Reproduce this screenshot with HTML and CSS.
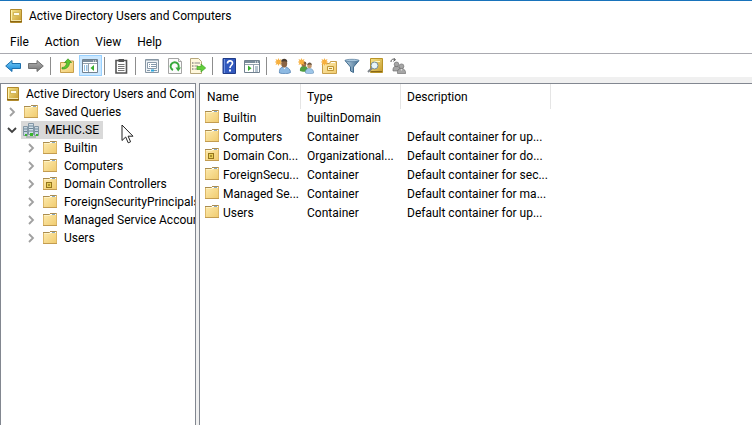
FILE: index.html
```html
<!DOCTYPE html>
<html lang="en">
<head>
<meta charset="utf-8">
<title>Active Directory Users and Computers</title>
<link rel="stylesheet" href="styles.css">
</head>
<body>
<svg class="defs" aria-hidden="true">
  <defs>
    <linearGradient id="gold" x1="0" y1="0" x2="1" y2="1"><stop offset="0" stop-color="#fdebb0"/><stop offset="1" stop-color="#f0cb6e"/></linearGradient>
    <linearGradient id="book" x1="0" y1="0" x2="1" y2="1"><stop offset="0" stop-color="#f6e58c"/><stop offset="1" stop-color="#c69a2b"/></linearGradient>
    <linearGradient id="blue" x1="0" y1="0" x2="0" y2="1"><stop offset="0" stop-color="#7cd0f8"/><stop offset="1" stop-color="#1383d6"/></linearGradient>
    <linearGradient id="grey" x1="0" y1="0" x2="0" y2="1"><stop offset="0" stop-color="#b5b5b5"/><stop offset="1" stop-color="#707070"/></linearGradient>
    <linearGradient id="steel" x1="0" y1="0" x2="1" y2="0"><stop offset="0" stop-color="#b9d2e4"/><stop offset="1" stop-color="#456f91"/></linearGradient>
    <symbol id="i-folder" viewBox="0 0 16 16">
      <path d="M1.500 2.500h6l1-1h6v12h-13z" fill="url(#gold)" stroke="#dcb768"/>
      <path d="M1 2.500h6.500M8 1.500h6.500" stroke="#a98c50"/>
      <path d="M8 2.500h6" stroke="#fff"/><path d="M10 2.500h3" stroke="#87a9c4"/>
      <path d="M2 3.500h6.500" stroke="#fff3c4"/><path d="M1 13.500h14" stroke="#c39c50"/>
    </symbol>
    <symbol id="i-ou" viewBox="0 0 16 16">
      <use href="#i-folder"/><rect x="4.500" y="6.500" width="5" height="5" fill="#e9cf58" stroke="#94751c"/><path d="M6 9h2" stroke="#6b5310"/>
    </symbol>
    <symbol id="i-book" viewBox="0 0 16 16">
      <path d="M2.500 1.500h11v13h-11z" fill="url(#book)" stroke="#b18a2c"/>
      <path d="M3.500 2v10" stroke="#fff3ae"/><path d="M2 13.500h12" stroke="#8b6714"/><path d="M3 12.500h10" stroke="#f4e7ac"/>
      <rect x="5.500" y="4.500" width="6" height="3" fill="#fffce9" stroke="#d3b75a"/>
    </symbol>
    <symbol id="i-domain" viewBox="0 0 16 16">
      <path d="M5.500 1.500h5v11h-5z" fill="#d3dfe8" stroke="#8296a5"/><path d="M.5 4.500h4v9h-4zM11.500 4.500h4v9h-4z" fill="#c8d7e2" stroke="#8296a5"/>
      <path d="M6 4h4M6 6.500h4M6 9h4M1 7h3M1 9.500h3M12 7h3M12 9.500h3" stroke="#6d8899"/>
      <path d="M2 12h2v2H2zM7 11h3v3H7zM13 12h2v2h-2z" fill="#38b52d"/><path d="M3 15h10" stroke="#87a094"/>
    </symbol>
    <symbol id="i-right" viewBox="0 0 16 16"><path d="M6 4l4 4-4 4" fill="none" stroke="#a0a0a0" stroke-width="1.800"/></symbol>
    <symbol id="i-down" viewBox="0 0 16 16"><path d="M4 6l4 4 4-4" fill="none" stroke="#404040" stroke-width="1.800"/></symbol>
    <symbol id="i-back" viewBox="0 0 16 16"><path d="M.7 8L7 2.500V5.500h8.500v5H7v3z" fill="url(#blue)" stroke="#1d6fac"/></symbol>
    <symbol id="i-forward" viewBox="0 0 16 16"><path d="M15.300 8L9 2.500V5.500H.5v5H9v3z" fill="url(#grey)" stroke="#707070"/></symbol>
    <symbol id="i-up" viewBox="0 0 16 16">
      <path d="M1.500 4.500h6l1-1.500h6v11.500h-13z" fill="url(#gold)" stroke="#c79f4b"/>
      <path d="M3 9.500C6 9.500 7.500 7.500 7.500 4.500H5.500L9 .8l3.500 3.700h-2C10.500 8.500 7.500 11.500 3 11z" fill="#5bc62d" stroke="#39931e" stroke-width=".7"/>
    </symbol>
    <symbol id="i-tree" viewBox="0 0 16 16">
      <path d="M.5 1.500h15v13H.5z" fill="#fff" stroke="#71818f"/><path d="M1 2h14v2H1z" fill="#7a8c9b"/><path d="M11 3h1M13 3h1" stroke="#fff"/>
      <path d="M1 5.500h14M6.500 6v8" stroke="#93a1ad"/><path d="M2 8h1M4 8h1.500M2 10h1M4 10h1.500M2 12h1M4 12h1.500" stroke="#2e83c5"/><path d="M12 7v6L8.500 10z" fill="#36ae2d"/>
    </symbol>
    <symbol id="i-clip" viewBox="0 0 16 16">
      <path d="M3 2.500h10.500V15H3z" fill="#fff" stroke="#555" stroke-width="1.600"/><path d="M5.500 1h5.500v3H5.500z" fill="#555"/>
      <path d="M5 6.500h6.500M5 8.500h6.500M5 10.500h6.500M5 12.500h6.500" stroke="#777"/>
    </symbol>
    <symbol id="i-props" viewBox="0 0 16 16">
      <path d="M1.500 1.500h13v13h-13z" fill="#f0f4f7" stroke="#8796a3"/><path d="M2 2.500h12" stroke="#b3c0ca"/>
      <path d="M3.500 4.500h9v6h-9z" fill="#fff" stroke="#8a9bab"/><path d="M5 6.500h1M7 6.500h5M5 8.500h1M7 8.500h5M3 12.500h3M10 12.500h3" stroke="#8298ab"/><path d="M7 11.500h3v2H7z" fill="#29a7df"/>
    </symbol>
    <symbol id="i-refresh" viewBox="0 0 16 16">
      <path d="M1.500.5h10l3 3v12h-13z" fill="#fbfbfb" stroke="#a5a5a5"/><path d="M11.500.5v3h3" fill="#eee" stroke="#a5a5a5"/>
      <path d="M6 12A4 4 0 1 1 11.300 10" fill="none" stroke="#36a83b" stroke-width="2"/><path d="M8.500 9.500h5.500L11.200 13.500z" fill="#36a83b"/>
    </symbol>
    <symbol id="i-export" viewBox="0 0 16 16">
      <path d="M.5.5h8l3 3v12H.5z" fill="#fff8dc" stroke="#b6a77c"/><path d="M2 5h1.500M2 8h1.500M2 11h1.500" stroke="#555"/><path d="M4.500 5H10M4.500 8H8M4.500 11H8" stroke="#8b8b8b"/>
      <path d="M7 8.500h4V6l4.700 4-4.700 4v-2.500H7z" fill="#62cf3a" stroke="#43a328" stroke-width=".7"/>
    </symbol>
    <symbol id="i-help" viewBox="0 0 16 16">
      <path d="M2 .5h12.500v15H2z" fill="#3158bd" stroke="#203b87"/><path d="M3.500 1v14" stroke="#6e91df"/>
      <path d="M6.500 5.500C6.500 2 11.500 2 11.500 5.200c0 2-2.500 2.200-2.500 4.800" fill="none" stroke="#fff" stroke-width="1.700"/><path d="M8 11.500h2v2H8z" fill="#fff"/>
    </symbol>
    <symbol id="i-action" viewBox="0 0 16 16">
      <path d="M.5 2.500h15v12H.5z" fill="#fff" stroke="#71818f"/><path d="M1 3h14v2H1z" fill="#7a8c9b"/><path d="M11 4h1M13 4h1" stroke="#fff"/>
      <path d="M1 6.500h14M9.500 7v7" stroke="#93a1ad"/><path d="M4 7.500v5.500L7.500 10.200z" fill="#36ae2d"/><path d="M11 9h3M11 11h3M11 13h3" stroke="#6e8ba2"/>
    </symbol>
    <symbol id="i-star" viewBox="0 0 16 16"><path d="M3.500 0l.8 2L6.500 1l-1 2.200 2 .8-2 .8 1 2.200-2.200-1-.8 2-.8-2-2.200 1 1-2.200-2-.8 2-.8L.5 1l2.200 1z" fill="#f7b03e"/></symbol>
    <symbol id="i-user" viewBox="0 0 16 16">
      <path d="M4.500 15c-.5-4 1-6 4.500-6s6.500 2 6.500 5.500c-2 1.500-8 1.500-11 .5z" fill="#8db9e2" stroke="#4779ac" stroke-width=".7"/>
      <path d="M8 9.200l1.500 2 1.500-2z" fill="#fff"/><ellipse cx="9.200" cy="5.500" rx="3" ry="4" fill="#8a6445"/><path d="M6.200 4C5.500-.5 13-.5 12.200 4c-1.500-1-4-1-6 0z" fill="#493d33"/><use href="#i-star"/>
    </symbol>
    <symbol id="i-group" viewBox="0 0 16 16">
      <path d="M2 13c-.5-3 1-5 4-5s4 2 4 5c-2 1-6 1-8 0z" fill="#4e9e3f"/><circle cx="6" cy="6.500" r="2.300" fill="#986c45"/><path d="M3.700 6c0-3.500 5-3.500 4.700 0-1-1-3-1-4.700 0z" fill="#59402b"/>
      <path d="M7.500 15c-.5-3 .8-4.500 3.800-4.500s4.400 1.800 4.400 4.500c-2 1-6 1-8.200 0z" fill="#9cc5e8" stroke="#5280aa" stroke-width=".5"/><circle cx="11.500" cy="8" r="2.300" fill="#c29870"/><path d="M9.200 7.200c0-3.500 5-3.500 4.600 0-1-1-3-1-4.600 0z" fill="#6b5640"/><use href="#i-star"/>
    </symbol>
    <symbol id="i-newou" viewBox="0 0 16 16">
      <path d="M1.500 5.500h7l1-2h6v12h-14z" fill="url(#gold)" stroke="#c79f4b"/><path d="M10 4.500h4" stroke="#fff"/><path d="M6.500 8.500h6v4h-6z" fill="#fff5c9" stroke="#c09635"/><path d="M8 10.500h3" stroke="#b98b29"/><use href="#i-star"/>
    </symbol>
    <symbol id="i-filter" viewBox="0 0 16 16"><path d="M1 2.500h14L9.500 9v5.500L6.500 13V9z" fill="url(#steel)" stroke="#416b8d"/><ellipse cx="8" cy="2.500" rx="7" ry="1.200" fill="#a8c6dc" stroke="#52799a" stroke-width=".7"/></symbol>
    <symbol id="i-find" viewBox="0 0 16 16">
      <path d="M3.500.5h12v14h-12z" fill="url(#book)" stroke="#b99428"/><path d="M4 13.500h11" stroke="#876719"/><path d="M7 3.500h6" stroke="#fff9c4"/>
      <path d="M5 10L1 14" stroke="#7d8389" stroke-width="2"/><circle cx="7.500" cy="7.500" r="3.500" fill="#e7f5fa" stroke="#758d98"/>
    </symbol>
    <symbol id="i-member" viewBox="0 0 16 16">
      <g fill="#a6a6a6" stroke="#646464" stroke-width=".6"><path d="M3 13c-.5-3 1-5 3.500-5s3.500 2 3.500 5z"/><circle cx="6.500" cy="6.300" r="2.300"/><path d="M7.500 15.500c-.5-3 .8-5 3.800-5s4.400 2 4.400 5z"/><circle cx="11.500" cy="8.300" r="2.400"/></g>
      <path d="M1 4C1 1 3 1 5 1.500M3.500 0l2 1.700-2.200 1.600" fill="none" stroke="#555"/><path d="M10.500 11l1 2 1-2z" fill="#ddd"/>
    </symbol>
  </defs>
</svg>

<div class="window">
  <header class="titlebar">
    <svg class="icon"><use href="#i-book"/></svg>
    <h1>Active Directory Users and Computers</h1>
  </header>
  <nav class="menubar">
    <button>File</button><button>Action</button><button>View</button><button>Help</button>
  </nav>
  <div class="toolbar" role="toolbar">
    <button aria-label="Back"><svg class="icon"><use href="#i-back"/></svg></button>
    <button aria-label="Forward"><svg class="icon"><use href="#i-forward"/></svg></button>
    <span class="sep"></span>
    <button aria-label="Up one level"><svg class="icon"><use href="#i-up"/></svg></button>
    <button class="pressed" aria-label="Show console tree" aria-pressed="true"><svg class="icon"><use href="#i-tree"/></svg></button>
    <span class="sep"></span>
    <button aria-label="Paste"><svg class="icon"><use href="#i-clip"/></svg></button>
    <span class="sep"></span>
    <button aria-label="Properties"><svg class="icon"><use href="#i-props"/></svg></button>
    <button aria-label="Refresh"><svg class="icon"><use href="#i-refresh"/></svg></button>
    <button aria-label="Export list"><svg class="icon"><use href="#i-export"/></svg></button>
    <span class="sep"></span>
    <button aria-label="Help topics"><svg class="icon"><use href="#i-help"/></svg></button>
    <button aria-label="Show action pane"><svg class="icon"><use href="#i-action"/></svg></button>
    <span class="sep"></span>
    <button aria-label="New user"><svg class="icon"><use href="#i-user"/></svg></button>
    <button aria-label="New group"><svg class="icon"><use href="#i-group"/></svg></button>
    <button aria-label="New organizational unit"><svg class="icon"><use href="#i-newou"/></svg></button>
    <button aria-label="Filter"><svg class="icon"><use href="#i-filter"/></svg></button>
    <button aria-label="Find"><svg class="icon"><use href="#i-find"/></svg></button>
    <button aria-label="Add to group"><svg class="icon"><use href="#i-member"/></svg></button>
  </div>
  <main class="panes">
    <ul class="tree" role="tree">
      <li class="root" role="treeitem"><span class="node"><svg class="icon"><use href="#i-book"/></svg>Active Directory Users and Com</span></li>
      <li role="treeitem"><svg class="icon"><use href="#i-right"/></svg><span class="node"><svg class="icon"><use href="#i-folder"/></svg>Saved Queries</span></li>
      <li role="treeitem"><svg class="icon"><use href="#i-down"/></svg><span class="node selected"><svg class="icon"><use href="#i-domain"/></svg>MEHIC.SE</span></li>
      <li class="child" role="treeitem"><svg class="icon"><use href="#i-right"/></svg><span class="node"><svg class="icon"><use href="#i-folder"/></svg>Builtin</span></li>
      <li class="child" role="treeitem"><svg class="icon"><use href="#i-right"/></svg><span class="node"><svg class="icon"><use href="#i-folder"/></svg>Computers</span></li>
      <li class="child" role="treeitem"><svg class="icon"><use href="#i-right"/></svg><span class="node"><svg class="icon"><use href="#i-ou"/></svg>Domain Controllers</span></li>
      <li class="child" role="treeitem"><svg class="icon"><use href="#i-right"/></svg><span class="node"><svg class="icon"><use href="#i-folder"/></svg>ForeignSecurityPrincipals</span></li>
      <li class="child" role="treeitem"><svg class="icon"><use href="#i-right"/></svg><span class="node"><svg class="icon"><use href="#i-folder"/></svg>Managed Service Accounts</span></li>
      <li class="child" role="treeitem"><svg class="icon"><use href="#i-right"/></svg><span class="node"><svg class="icon"><use href="#i-folder"/></svg>Users</span></li>
    </ul>
    <section class="list">
      <table>
        <colgroup><col class="c-name"><col class="c-type"><col class="c-desc"></colgroup>
        <thead><tr><th>Name</th><th>Type</th><th>Description</th></tr></thead>
        <tbody>
          <tr><td><svg class="icon"><use href="#i-folder"/></svg>Builtin</td><td>builtinDomain</td><td></td></tr>
          <tr><td><svg class="icon"><use href="#i-folder"/></svg>Computers</td><td>Container</td><td>Default container for up...</td></tr>
          <tr><td><svg class="icon"><use href="#i-ou"/></svg>Domain Con...</td><td>Organizational...</td><td>Default container for do...</td></tr>
          <tr><td><svg class="icon"><use href="#i-folder"/></svg>ForeignSecu...</td><td>Container</td><td>Default container for sec...</td></tr>
          <tr><td><svg class="icon"><use href="#i-folder"/></svg>Managed Se...</td><td>Container</td><td>Default container for ma...</td></tr>
          <tr><td><svg class="icon"><use href="#i-folder"/></svg>Users</td><td>Container</td><td>Default container for up...</td></tr>
        </tbody>
      </table>
    </section>
  </main>
  <svg class="pointer" viewBox="0 0 13 20" aria-hidden="true"><path d="M1 1v15.500l3.700-3.500 2.500 5.800 2.400-1-2.500-5.600H12z" fill="#fff" stroke="#222"/></svg>
</div>
</body>
</html>
```

FILE: styles.css
```css
* { box-sizing: border-box; }
body {
  margin: 0;
  font: 12px/18px Roboto, "Open Sans", sans-serif;
  color: #000;
  background: #fff;
}
button { font: inherit; color: inherit; background: none; border: 0; padding: 0; }
.defs { position: absolute; width: 0; height: 0; }
.icon { width: 16px; height: 16px; flex: none; }

.window { position: relative; display: flex; flex-direction: column; min-height: 100vh; border-top: 1px solid #1873bb; overflow: hidden; }
.titlebar { display: flex; align-items: center; gap: 5px; height: 30px; padding-left: 8px; }
.titlebar h1 { margin: 0; font-size: 12px; font-weight: 400; }
.menubar { display: flex; gap: 16px; height: 22px; padding-left: 10px; align-items: center; }
.toolbar { display: flex; align-items: flex-start; padding: 1px 2px 0; height: 24px; border-top: 1px solid #a9aab0; }
.toolbar button { padding: 3px 4px 2px 3px; width: 23px; height: 21px; display: flex; }
.toolbar .pressed { background: #cce8ff; outline: 1px solid #99d1ff; outline-offset: -1px; }
.sep { width: 1px; height: 18px; margin: 2px 5px 0 2px; background: #8d8d8d; }

.panes { flex: 1; display: grid; grid-template-columns: 196px 1fr; gap: 3px; padding-top: 6px; background: #f0f0f0; }
.tree, .list { background: #fff; border: 1px solid #828790; border-bottom: 0; }
.tree { margin: 0; padding: 1px 0 0 3px; list-style: none; overflow: hidden; }
.tree li { display: flex; align-items: center; height: 18px; overflow: hidden; white-space: nowrap; }
.tree .child { padding-left: 19px; }
.node { display: flex; align-items: center; gap: 6px; height: 18px; padding-left: 2px; }
.root .node { gap: 5px; padding-left: 1px; }
.tree li > .icon { margin-right: 1px; }
.selected { padding-right: 4px; background: #d9d9d9; }

.list { border-right: 0; overflow: hidden; }
table { table-layout: fixed; border-collapse: separate; border-spacing: 0; width: 351px; }
.c-name { width: 101px; }
.c-type { width: 100px; }
.c-desc { width: 150px; }
th, td { padding: 0 0 0 6px; text-align: left; font-weight: 400; white-space: nowrap; }
th { height: 25px; border-right: 1px solid #e5e5e5; }
th:first-child { padding-left: 7px; }
td { height: 19px; line-height: 19px; }
td:first-child { padding-left: 4px; }
td .icon { margin-right: 3px; vertical-align: -3px; }

.pointer { position: absolute; left: 121px; top: 123px; width: 13px; height: 20px; }
```
